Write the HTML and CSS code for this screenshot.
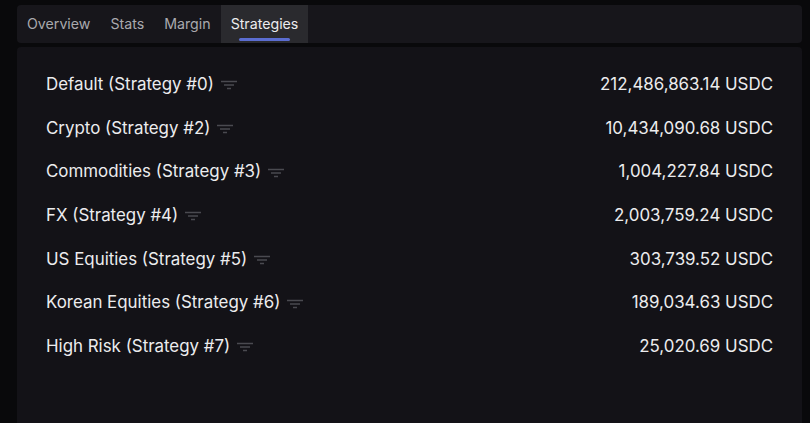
FILE: index.html
```html
<!DOCTYPE html>
<html>
<head>
<meta charset="utf-8">
<link rel="stylesheet" href="styles.css">
</head>
<body>
<div class="page">
  <div class="tabs">
    <div class="tab">Overview</div>
    <div class="tab">Stats</div>
    <div class="tab">Margin</div>
    <div class="tab active">Strategies</div>
  </div>
  <div class="panel">
    <div class="row"><div class="name">Default (Strategy #0)<svg class="filt" width="16" height="10" viewBox="0 0 16 10"><path d="M0 1.5h16M3 5h10M6 8.5h4" stroke="#4a4a50" stroke-width="1.4"/></svg></div><div class="val">212,486,863.14 USDC</div></div>
    <div class="row"><div class="name">Crypto (Strategy #2)<svg class="filt" width="16" height="10" viewBox="0 0 16 10"><path d="M0 1.5h16M3 5h10M6 8.5h4" stroke="#4a4a50" stroke-width="1.4"/></svg></div><div class="val">10,434,090.68 USDC</div></div>
    <div class="row"><div class="name">Commodities (Strategy #3)<svg class="filt" width="16" height="10" viewBox="0 0 16 10"><path d="M0 1.5h16M3 5h10M6 8.5h4" stroke="#4a4a50" stroke-width="1.4"/></svg></div><div class="val">1,004,227.84 USDC</div></div>
    <div class="row"><div class="name">FX (Strategy #4)<svg class="filt" width="16" height="10" viewBox="0 0 16 10"><path d="M0 1.5h16M3 5h10M6 8.5h4" stroke="#4a4a50" stroke-width="1.4"/></svg></div><div class="val">2,003,759.24 USDC</div></div>
    <div class="row"><div class="name">US Equities (Strategy #5)<svg class="filt" width="16" height="10" viewBox="0 0 16 10"><path d="M0 1.5h16M3 5h10M6 8.5h4" stroke="#4a4a50" stroke-width="1.4"/></svg></div><div class="val">303,739.52 USDC</div></div>
    <div class="row"><div class="name">Korean Equities (Strategy #6)<svg class="filt" width="16" height="10" viewBox="0 0 16 10"><path d="M0 1.5h16M3 5h10M6 8.5h4" stroke="#4a4a50" stroke-width="1.4"/></svg></div><div class="val">189,034.63 USDC</div></div>
    <div class="row"><div class="name">High Risk (Strategy #7)<svg class="filt" width="16" height="10" viewBox="0 0 16 10"><path d="M0 1.5h16M3 5h10M6 8.5h4" stroke="#4a4a50" stroke-width="1.4"/></svg></div><div class="val">25,020.69 USDC</div></div>
  </div>
</div>
</body>
</html>
```
FILE: styles.css
```css
html, body {
  margin: 0;
  padding: 0;
  background: #09090b;
  height: 100%;
  overflow: hidden;
}
body {
  font-family: Inter, "Liberation Sans", sans-serif;
  color: #ececee;
}
.page {
  padding: 5px 8px 0 17px;
  display: flex;
  flex-direction: column;
  gap: 4px;
  height: 100%;
  box-sizing: border-box;
}
.tabs {
  display: flex;
  height: 38px;
  background: #17161b;
  border-radius: 4px;
}
.tab {
  display: flex;
  align-items: center;
  padding: 0 10px 2px 10px;
  font-size: 14.2px;
  color: #a9a9ae;
  position: relative;
}
.tab.active {
  background: #2a2a2e;
  color: #ececee;
}
.tab.active::after {
  content: "";
  position: absolute;
  left: 18px;
  right: 18px;
  bottom: 2px;
  height: 3px;
  border-radius: 2px;
  background: #5b6dd1;
}
.panel {
  flex: 1;
  background: #131217;
  border-radius: 4px 4px 0 0;
  padding: 15px 29px 0 29px;
  display: flex;
  flex-direction: column;
}
.row {
  display: flex;
  justify-content: space-between;
  align-items: center;
  height: 43.7px;
  font-size: 16.9px;
}
.name {
  display: flex;
  align-items: center;
  gap: 7px;
}
.filt {
  display: block;
  margin-top: 3px;
}
```
